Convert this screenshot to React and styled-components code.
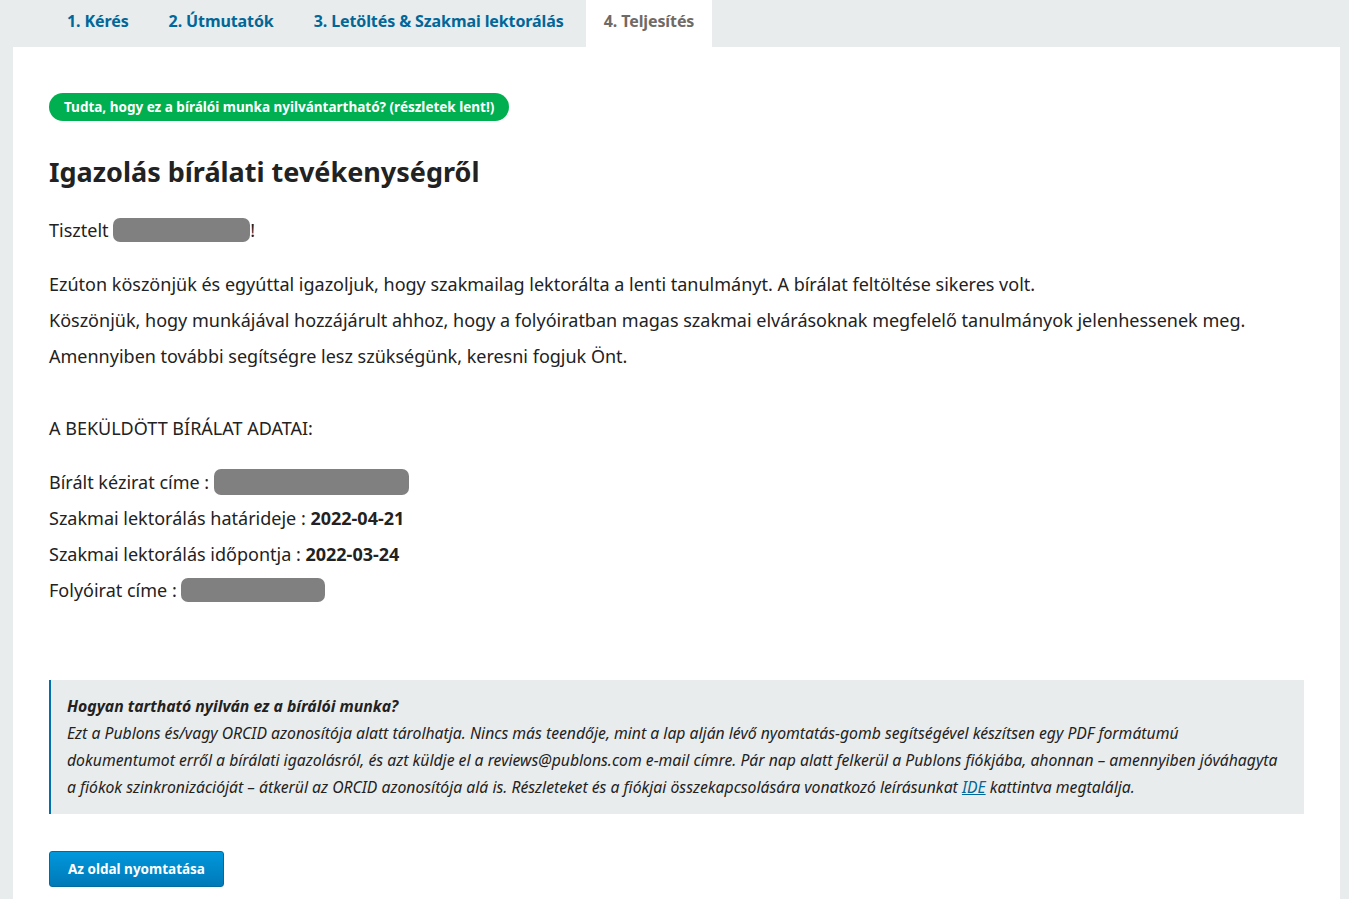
import React from "react";
import styled, { createGlobalStyle } from "styled-components";

const GlobalStyle = createGlobalStyle`
	html, body {
		margin: 0;
		padding: 0;
		background: #e9eced;
		font-family: "Noto Sans", "Open Sans", sans-serif;
		color: #222;
	}
`;

const tabs = [
	{ label: "1. Kérés" },
	{ label: "2. Útmutatók" },
	{ label: "3. Letöltés & Szakmai lektorálás" },
	{ label: "4. Teljesítés", active: true },
];

function App() {
	return (
		<Wrapper>
			<GlobalStyle />
			<TabBar>
				{tabs.map((t) => (
					<Tab key={t.label} $active={t.active}>
						{t.label}
					</Tab>
				))}
			</TabBar>
			<Panel>
				<Pill>Tudta, hogy ez a bírálói munka nyilvántartható? (részletek lent!)</Pill>
				<Heading>Igazolás bírálati tevékenységről</Heading>
				<Line>
					Tisztelt <Redacted $w={137} />!
				</Line>
				<Paragraphs>
					<Line>
						Ezúton köszönjük és egyúttal igazoljuk, hogy szakmailag lektorálta a
						lenti tanulmányt. A bírálat feltöltése sikeres volt.
					</Line>
					<Line>
						Köszönjük, hogy munkájával hozzájárult ahhoz, hogy a folyóiratban
						magas szakmai elvárásoknak megfelelő tanulmányok jelenhessenek meg.
					</Line>
					<Line>
						Amennyiben további segítségre lesz szükségünk, keresni fogjuk Önt.
					</Line>
				</Paragraphs>
				<Line>A BEKÜLDÖTT BÍRÁLAT ADATAI:</Line>
				<Details>
					<Line>
						Bírált kézirat címe : <Redacted $w={195} $h={26} />
					</Line>
					<Line>
						Szakmai lektorálás határideje : <b>2022-04-21</b>
					</Line>
					<Line>
						Szakmai lektorálás időpontja : <b>2022-03-24</b>
					</Line>
					<Line>
						Folyóirat címe : <Redacted $w={144} />
					</Line>
				</Details>
				<InfoBox>
					<strong>Hogyan tartható nyilván ez a bírálói munka?</strong>
					<br />
					Ezt a Publons és/vagy ORCID azonosítója alatt tárolhatja. Nincs más
					teendője, mint a lap alján lévő nyomtatás-gomb segítségével készítsen
					egy PDF formátumú
					<br />
					dokumentumot erről a bírálati igazolásról, és azt küldje el a
					reviews@publons.com e-mail címre. Pár nap alatt felkerül a Publons
					fiókjába, ahonnan – amennyiben jóváhagyta
					<br />
					a fiókok szinkronizációját – átkerül az ORCID azonosítója alá is.
					Részleteket és a fiókjai összekapcsolására vonatkozó leírásunkat{" "}
					<a href="#ide">IDE</a> kattintva megtalálja.
				</InfoBox>
				<PrintButton>Az oldal nyomtatása</PrintButton>
			</Panel>
		</Wrapper>
	);
}

const Wrapper = styled.div`
	padding: 0 9px 0 13px;
`;

const TabBar = styled.nav`
	display: flex;
	gap: 4px;
	padding-left: 36px;
	height: 47px;
`;

const Tab = styled.div`
	display: flex;
	align-items: center;
	padding: 0 18px;
	padding-bottom: 6px;
	font-size: 16px;
	font-weight: 700;
	letter-spacing: -0.1px;
	color: ${(p) => (p.$active ? "#6f6a66" : "#006798")};
	background: ${(p) => (p.$active ? "#fff" : "transparent")};
`;

const Panel = styled.main`
	background: #fff;
	padding: 46px 36px 40px 36px;
`;

const Pill = styled.div`
	display: inline-block;
	background: #00b050;
	color: #fff;
	font-size: 13.5px;
	font-weight: 700;
	line-height: 28px;
	padding: 0 15px;
	border-radius: 14px;
`;

const Heading = styled.h1`
	font-size: 27px;
	font-weight: 700;
	margin: 31px 0 20px;
	line-height: 40px;
	color: #222;
`;

const Line = styled.div`
	font-size: 18px;
	line-height: 36px;
	color: #222;

	b {
		font-weight: 700;
	}
`;

const Paragraphs = styled.div`
	margin: 18px 0 36px;
`;

const Details = styled.div`
	margin-top: 18px;
`;

const Redacted = styled.span`
	display: inline-block;
	width: ${(p) => p.$w}px;
	height: ${(p) => p.$h || 24}px;
	background: #808080;
	border-radius: 7px;
	vertical-align: middle;
	margin-top: -4px;
`;

const InfoBox = styled.div`
	margin-top: 72px;
	background: #e9eced;
	border-left: 2px solid #006fae;
	padding: 13px 16px 13px 16px;
	font-size: 15.75px;
	font-style: italic;
	line-height: 27px;
	color: #222;

	strong {
		font-weight: 700;
	}

	a {
		color: #006798;
	}
`;

const PrintButton = styled.button`
	display: block;
	margin-top: 37px;
	height: 36px;
	padding: 0 18px;
	border: 1px solid #006b9e;
	border-radius: 3px;
	background: linear-gradient(#0098dc, #0079b8);
	color: #fff;
	font-family: "Noto Sans", sans-serif;
	font-size: 13.5px;
	font-weight: 700;
	cursor: pointer;
`;

export default App;
